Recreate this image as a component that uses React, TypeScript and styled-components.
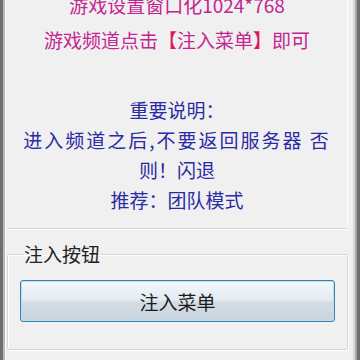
import React from "react"
import styled, { createGlobalStyle } from "styled-components"

const GlobalStyle = createGlobalStyle`
  html, body {
    margin: 0;
    padding: 0;
    background: #f0f0f0;
  }
  body {
    font-family: "Noto Sans CJK SC", "Noto Sans", sans-serif;
  }
`

const Frame = styled.div`
  width: 360px;
  height: 360px;
  overflow: hidden;
  box-sizing: border-box;
  background: #f0f0f0;
  display: flex;
  flex-direction: column;
  box-shadow:
    inset 3px 0 #6e6e6e,
    inset 5px 0 #b8b8b8,
    inset 6px 0 #fafafa,
    inset -3px 0 #6e6e6e,
    inset -5px 0 #a8a8a8,
    inset -7px 0 #d8d8d8;
`

const InfoPanel = styled.div`
  margin: 0 12px 0 7px;
  height: 229px;
  flex-shrink: 0;
  box-sizing: border-box;
  border-right: 1px solid #fcfcfc;
  border-bottom: 1px solid #d2d2d2;
  box-shadow: 0 1px 0 #ffffff;
  display: flex;
  flex-direction: column;
  align-items: center;
  text-align: center;
`

const Line = styled.div<{ $tone: "pink" | "blue" }>`
  font-size: 19px;
  line-height: ${(p) => (p.$tone === "pink" ? "35px" : "30px")};
  color: ${(p) => (p.$tone === "pink" ? "#c42592" : "#2b2ba3")};
  white-space: nowrap;
`

const TopLine = styled(Line)`
  margin-top: -13px;
`

const Wide = styled.span`
  letter-spacing: 2px;
`

const Bracket = styled.span`
  color: #dc1a5c;
`

const Spacer = styled.div`
  height: 38px;
`

const Group = styled.fieldset`
  margin: 13px 12px 0 7px;
  padding: 14px 12px 0 12px;
  height: 108px;
  flex-shrink: 0;
  box-sizing: border-box;
  border: 1px solid #d5d5d5;
  border-radius: 2px;
  box-shadow: inset 1px 1px 0 #ffffff, 1px 1px 0 #ffffff;
`

const Legend = styled.legend`
  margin-left: 4px;
  padding: 0;
  font-size: 19px;
  line-height: 24px;
  color: #222222;
`

const Button = styled.button`
  width: 100%;
  height: 42px;
  box-sizing: border-box;
  border: 1px solid #3f7fae;
  border-radius: 3px;
  background: linear-gradient(#f4f8fb 0%, #e3ebf1 48%, #d3dde6 52%, #c8d4de 100%);
  box-shadow: inset 0 0 0 1px #b9dff2;
  font-family: "Noto Sans CJK SC", "Noto Sans", sans-serif;
  font-size: 19px;
  color: #1c1c1c;
  padding: 0;
`

export default function App() {
  return (
    <>
      <GlobalStyle />
      <Frame>
        <InfoPanel>
          <TopLine $tone="pink">游戏设置窗口化1024*768</TopLine>
          <Line $tone="pink">
            游戏频道点击<Bracket>【</Bracket>注入菜单<Bracket>】</Bracket>即可
          </Line>
          <Spacer />
          <Line $tone="blue">重要说明：</Line>
          <Line $tone="blue">
            <Wide>进入频道之后,不要返回服务器 否</Wide>
          </Line>
          <Line $tone="blue">则！闪退</Line>
          <Line $tone="blue">推荐：团队模式</Line>
        </InfoPanel>
        <Group>
          <Legend>注入按钮</Legend>
          <Button>注入菜单</Button>
        </Group>
      </Frame>
    </>
  )
}
